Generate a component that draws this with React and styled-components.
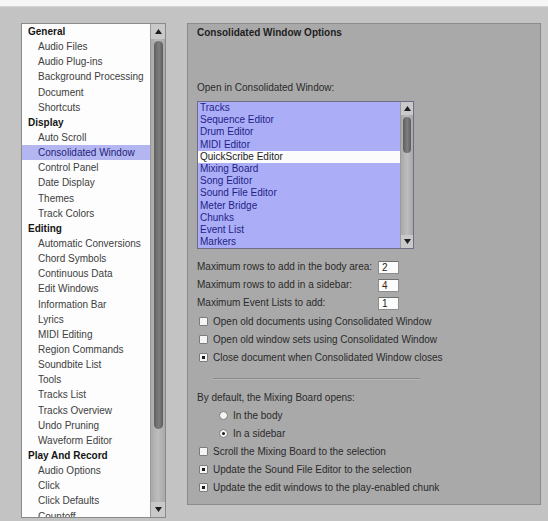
import React from "react";
import styled, { createGlobalStyle } from "styled-components";

const GlobalStyle = createGlobalStyle`
  html, body {
    margin: 0;
    padding: 0;
    background: #c3c3c3;
  }
  body {
    font-family: "Liberation Sans", Arial, sans-serif;
    font-size: 10px;
    color: #2a2a2a;
  }
  * { box-sizing: border-box; }
`;

const Window = styled.div`
  width: 548px;
  height: 521px;
  display: flex;
  flex-direction: column;
  background: #c3c3c3;
  overflow: hidden;
`;

const TopStrip = styled.div`
  height: 7px;
  background: #f6f6f6;
  border-bottom: 1px solid #d4d4d4;
`;

const Body = styled.div`
  display: flex;
  align-items: flex-start;
  padding: 16px 0 0 21px;
`;

/* ---------- category sidebar ---------- */

const Sidebar = styled.div`
  width: 145px;
  height: 495px;
  display: flex;
  border: 1px solid #8a8a8a;
  background: #fff;
`;

const CategoryList = styled.div`
  flex: 1;
  overflow: hidden;
  background: #fdfdfd;
`;

const CategoryRow = styled.div`
  height: 15.15px;
  line-height: 15.15px;
  white-space: nowrap;
  padding-left: ${(p) => (p.$header ? 6 : 16)}px;
  font-weight: ${(p) => (p.$header ? "bold" : "normal")};
  color: ${(p) => (p.$header ? "#151515" : "#404040")};
  background: ${(p) => (p.$selected ? "#b3b6f1" : "transparent")};
  ${(p) => p.$selected && "color: #24247a;"}
`;

/* ---------- scrollbars ---------- */

const ScrollBar = styled.div`
  width: ${(p) => p.$width}px;
  display: flex;
  flex-direction: column;
  background: ${(p) => p.$track};
  border-left: 1px solid #9a9a9a;
`;

const ArrowButton = styled.div`
  height: ${(p) => p.$size}px;
  display: flex;
  align-items: center;
  justify-content: center;
  background: #c9c9c9;
`;

const Track = styled.div`
  flex: 1;
  display: flex;
  flex-direction: column;
  align-items: center;
  background: linear-gradient(to right, #a9a9a9, #bdbdbd 50%, #a9a9a9);
`;

const Thumb = styled.div`
  width: ${(p) => p.$w}px;
  margin-top: ${(p) => p.$top}px;
  height: ${(p) => p.$h}px;
  border-radius: 5px;
  background: linear-gradient(to right, #5f5f5f, #7e7e7e 55%, #5c5c5c);
`;

const Arrow = ({ down }) => (
  <svg width="7" height="5" viewBox="0 0 7 5">
    <polygon
      points={down ? "0,0 7,0 3.5,5" : "0,5 7,5 3.5,0"}
      fill="#1d1d1d"
    />
  </svg>
);

const VScroll = ({ width, track, arrow, thumbTop, thumbHeight, thumbWidth }) => (
  <ScrollBar $width={width} $track={track}>
    <ArrowButton $size={arrow}>
      <Arrow />
    </ArrowButton>
    <Track>
      <Thumb $w={thumbWidth} $top={thumbTop} $h={thumbHeight} />
    </Track>
    <ArrowButton $size={arrow}>
      <Arrow down />
    </ArrowButton>
  </ScrollBar>
);

/* ---------- options panel ---------- */

const Panel = styled.div`
  margin-left: 21px;
  width: 354px;
  height: 482px;
  background: #a9a9a9;
  border: 1px solid #8b8b8b;
  padding: 3px 0 0 9px;
`;

const PanelTitle = styled.div`
  font-weight: bold;
  line-height: 12px;
  color: #1e1e1e;
  margin-bottom: 43px;
`;

const FieldLabel = styled.div`
  line-height: 12px;
  color: #2a2a2a;
`;

const WindowList = styled.div`
  margin-top: 7px;
  margin-bottom: 9px;
  width: 217px;
  height: 148px;
  display: flex;
  border: 1px solid #6d6d86;
  background: #abaef6;
`;

const WindowItems = styled.div`
  flex: 1;
  overflow: hidden;
`;

const WindowItem = styled.div`
  height: 12.2px;
  line-height: 12.2px;
  padding-left: 2px;
  white-space: nowrap;
  color: ${(p) => (p.$selected ? "#1b1b1b" : "#1f1f88")};
  background: ${(p) => (p.$selected ? "#fbfbfb" : "transparent")};
`;

const NumberRow = styled.div`
  display: grid;
  grid-template-columns: 181px 21px;
  align-items: center;
  height: 18px;
`;

const NumberBox = styled.div`
  height: 13px;
  line-height: 12px;
  padding-left: 3px;
  background: #fcfcfc;
  border: 1px solid #8e8e8e;
  border-top-color: #6f6f6f;
  color: ${(p) => (p.$active ? "#4a1c10" : "#1e1e1e")};
`;

const OptionRow = styled.label`
  display: flex;
  align-items: center;
  gap: 5px;
  height: 18px;
  padding-left: ${(p) => p.$indent}px;
  white-space: nowrap;
  color: #2a2a2a;
`;

const CheckBox = styled.span`
  width: 9px;
  height: 9px;
  flex: none;
  display: flex;
  align-items: center;
  justify-content: center;
  background: #f4f4f4;
  border: 1px solid #7c7c7c;
  border-radius: 1px;
  &::after {
    content: "";
    width: 3px;
    height: 3px;
    background: ${(p) => (p.$on ? "#1a1a1a" : "transparent")};
  }
`;

const RadioDot = styled(CheckBox)`
  border-radius: 50%;
  &::after {
    border-radius: 50%;
  }
`;

const Separator = styled.div`
  width: 207px;
  height: 2px;
  margin: 12px 0 8px 16px;
  border-top: 1px solid #8a8a8a;
  border-bottom: 1px solid #b6b6b6;
`;

const categories = [
  ["General", true],
  ["Audio Files"],
  ["Audio Plug-ins"],
  ["Background Processing"],
  ["Document"],
  ["Shortcuts"],
  ["Display", true],
  ["Auto Scroll"],
  ["Consolidated Window", false, true],
  ["Control Panel"],
  ["Date Display"],
  ["Themes"],
  ["Track Colors"],
  ["Editing", true],
  ["Automatic Conversions"],
  ["Chord Symbols"],
  ["Continuous Data"],
  ["Edit Windows"],
  ["Information Bar"],
  ["Lyrics"],
  ["MIDI Editing"],
  ["Region Commands"],
  ["Soundbite List"],
  ["Tools"],
  ["Tracks List"],
  ["Tracks Overview"],
  ["Undo Pruning"],
  ["Waveform Editor"],
  ["Play And Record", true],
  ["Audio Options"],
  ["Click"],
  ["Click Defaults"],
  ["Countoff"],
];

const windows = [
  "Tracks",
  "Sequence Editor",
  "Drum Editor",
  "MIDI Editor",
  "QuickScribe Editor",
  "Mixing Board",
  "Song Editor",
  "Sound File Editor",
  "Meter Bridge",
  "Chunks",
  "Event List",
  "Markers",
];

const limits = [
  ["Maximum rows to add in the body area:", "2"],
  ["Maximum rows to add in a sidebar:", "4", true],
  ["Maximum Event Lists to add:", "1"],
];

export default function App() {
  return (
    <Window>
      <GlobalStyle />
      <TopStrip />
      <Body>
        <Sidebar>
          <CategoryList>
            {categories.map(([name, header, selected]) => (
              <CategoryRow key={name} $header={header} $selected={selected}>
                {name}
              </CategoryRow>
            ))}
          </CategoryList>
          <VScroll
            width={15}
            track="#8f8f8f"
            arrow={15}
            thumbTop={2}
            thumbHeight={388}
            thumbWidth={9}
          />
        </Sidebar>

        <Panel>
          <PanelTitle>Consolidated Window Options</PanelTitle>
          <FieldLabel>Open in Consolidated Window:</FieldLabel>
          <WindowList>
            <WindowItems>
              {windows.map((w) => (
                <WindowItem key={w} $selected={w === "QuickScribe Editor"}>
                  {w}
                </WindowItem>
              ))}
            </WindowItems>
            <VScroll
              width={13}
              track="#b5b5b5"
              arrow={13}
              thumbTop={2}
              thumbHeight={36}
              thumbWidth={8}
            />
          </WindowList>

          {limits.map(([label, value, active]) => (
            <NumberRow key={label}>
              <FieldLabel>{label}</FieldLabel>
              <NumberBox $active={active}>{value}</NumberBox>
            </NumberRow>
          ))}

          <OptionRow $indent={2}>
            <CheckBox />
            Open old documents using Consolidated Window
          </OptionRow>
          <OptionRow $indent={2}>
            <CheckBox />
            Open old window sets using Consolidated Window
          </OptionRow>
          <OptionRow $indent={2}>
            <CheckBox $on />
            Close document when Consolidated Window closes
          </OptionRow>

          <Separator />

          <OptionRow $indent={0}>By default, the Mixing Board opens:</OptionRow>
          <OptionRow $indent={22}>
            <RadioDot />
            In the body
          </OptionRow>
          <OptionRow $indent={22}>
            <RadioDot $on />
            In a sidebar
          </OptionRow>
          <OptionRow $indent={2}>
            <CheckBox />
            Scroll the Mixing Board to the selection
          </OptionRow>
          <OptionRow $indent={2}>
            <CheckBox $on />
            Update the Sound File Editor to the selection
          </OptionRow>
          <OptionRow $indent={2}>
            <CheckBox $on />
            Update the edit windows to the play-enabled chunk
          </OptionRow>
        </Panel>
      </Body>
    </Window>
  );
}
